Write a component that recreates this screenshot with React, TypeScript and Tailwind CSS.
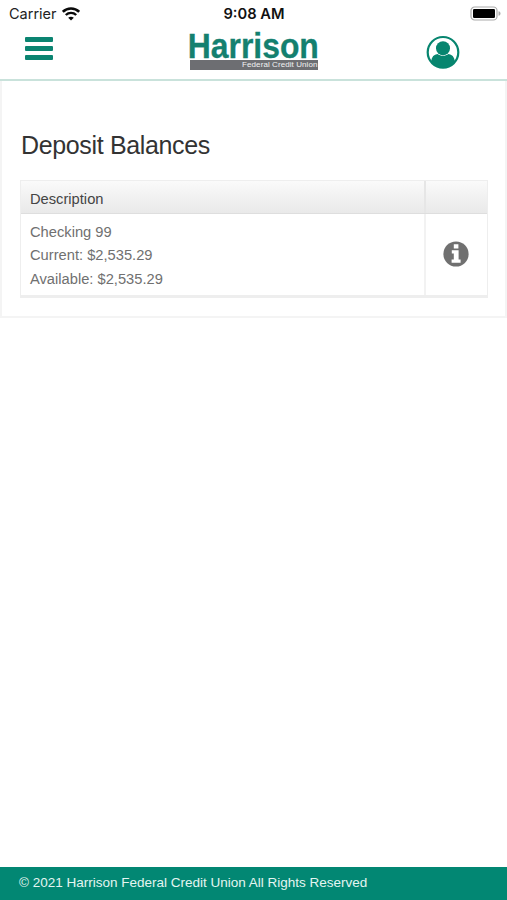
const account = {
  name: "Checking 99",
  current: "$2,535.29",
  available: "$2,535.29",
};

function WifiIcon() {
  return (
    <svg width="18" height="14" viewBox="0 0 18 14" fill="none" stroke="#0a0a0a">
      <path d="M.8 4.8C5.3.3 12.7.3 17.2 4.8" strokeWidth="2.6" />
      <path d="M3.8 8c2.9-2.8 7.5-2.8 10.4 0" strokeWidth="2.4" />
      <path d="M9 13.6 6.2 10.8c1.6-1.5 4-1.5 5.6 0z" fill="#0a0a0a" stroke="none" />
    </svg>
  );
}

function BatteryIcon() {
  return (
    <svg width="32" height="16" viewBox="0 0 32 16">
      <rect x="1" y="1" width="26" height="13" rx="3.6" fill="#fff" stroke="#aaa" strokeWidth="1.2" />
      <rect x="3" y="3" width="22" height="9" rx="1.2" fill="#000" />
      <path d="M28.5 5.3c1.3.3 2 1.1 2 2.2s-.7 1.9-2 2.2z" fill="#aaa" />
    </svg>
  );
}

function InfoIcon() {
  return (
    <svg width="26" height="26" viewBox="0 0 26 26">
      <circle cx="13" cy="13" r="12.6" fill="#707070" />
      <path d="M10.8 3.2h4.6v4.4h-4.6zM8.8 9.2h6.8v9.2h2v3.4H8.6v-3.4h2.2v-6H8.8z" fill="#fff" />
    </svg>
  );
}

function StatusBar() {
  return (
    <div className="grid h-7 grid-cols-3 items-center pl-[9px] pr-[5px] text-[#222]">
      <div className="flex items-center gap-[5px]">
        <span className="font-['Inter','Liberation_Sans',sans-serif] text-[14.5px] leading-7">Carrier</span>
        <WifiIcon />
      </div>
      <span className="pr-[3px] text-center font-['Inter','Liberation_Sans',sans-serif] text-[14.7px] font-semibold leading-7 text-[#111]">
        9:08 AM
      </span>
      <div className="flex justify-end">
        <BatteryIcon />
      </div>
    </div>
  );
}

function Logo() {
  return (
    <div className="flex w-[130px] flex-col items-center">
      <svg className="overflow-visible" width="130" height="27" viewBox="0 0 130 27" fontFamily="Liberation Sans, Arial, sans-serif">
        <text
          x="-1.2"
          y="25.4"
          fontSize="34.5"
          fontWeight="700"
          fill="#14806f"
          stroke="#14806f"
          strokeWidth="0.3"
          textLength="131"
          lengthAdjust="spacingAndGlyphs"
        >
          Harrison
        </text>
      </svg>
      <div className="flex h-[10px] w-32 items-center justify-end bg-[#6d6e72]">
        <span className="text-[8px] leading-[10px] tracking-[0.01em] text-[#f2f2f2]">Federal Credit Union</span>
      </div>
    </div>
  );
}

function ProfileIcon() {
  return (
    <svg width="34" height="34" viewBox="0 0 34 34">
      <defs>
        <clipPath id="profile-ring">
          <circle cx="17" cy="17.3" r="15.5" />
        </clipPath>
      </defs>
      <circle cx="17" cy="17.3" r="15.3" fill="#fff" stroke="#07856f" strokeWidth="2.2" />
      <path
        d="M5.2 30v-4.2c.5-4 2.8-6.2 6.3-6.8 3.2 2.4 7.8 2.4 11 0 3.5.6 5.8 2.8 6.3 6.8V30L22 34H12z"
        fill="#07856f"
        clipPath="url(#profile-ring)"
      />
      <circle cx="17" cy="13.2" r="7" fill="#07856f" />
    </svg>
  );
}

function Header() {
  return (
    <header className="flex h-[53px] items-start justify-between border-b-2 border-[#c9e2db] pl-[25px] pr-[47px]">
      <button className="mt-[9px] flex w-7 flex-col gap-1" aria-label="Menu">
        <span className="h-[5px] w-full rounded-[1px] bg-[#0b8471]" />
        <span className="h-[5px] w-full rounded-[1px] bg-[#0b8471]" />
        <span className="h-[5px] w-full rounded-[1px] bg-[#0b8471]" />
      </button>
      <div className="ml-[28px] mt-[5px]">
        <Logo />
      </div>
      <button className="mt-[7px]" aria-label="Profile">
        <ProfileIcon />
      </button>
    </header>
  );
}

function BalancesTable() {
  return (
    <div className="ml-[18px] mr-[17px] border border-b-[3px] border-[#eee]">
      <div className="flex h-[33px] border-b border-[#dedede] bg-gradient-to-b from-[#fafafa] to-[#e9e9e9]">
        <div className="flex-1 pl-[9px] text-[14.7px] leading-[36px] text-[#444]">Description</div>
        <div className="w-[63px] border-l-2 border-[#e6e6e6]" />
      </div>
      <div className="flex h-[81px]">
        <div className="flex-1 pl-[9px] pt-[7px] text-[14.7px] leading-[23.3px] text-[#707070]">
          <p>{account.name}</p>
          <p>Current: {account.current}</p>
          <p>Available: {account.available}</p>
        </div>
        <div className="flex w-[63px] items-start border-l-2 border-[#f2f2f2] pl-[17px] pt-[27px]">
          <InfoIcon />
        </div>
      </div>
    </div>
  );
}

export default function App() {
  return (
    <div className="flex h-[900px] w-[507px] flex-col overflow-hidden bg-white font-['Liberation_Sans',Arial,sans-serif]">
      <StatusBar />
      <Header />
      <main className="flex-1">
        <section className="h-[237px] border-x-2 border-b-2 border-[#f4f4f4]">
          <h1 className="ml-[19px] pt-[49px] text-[25px] leading-[30px] tracking-[-0.35px] text-[#333]">Deposit Balances</h1>
          <div className="mt-5">
            <BalancesTable />
          </div>
        </section>
      </main>
      <footer className="h-[33px] bg-[#028773] pl-[19px] text-[13.5px] leading-[31px] text-[#e4f5f1]">
        © 2021 Harrison Federal Credit Union All Rights Reserved
      </footer>
    </div>
  );
}
